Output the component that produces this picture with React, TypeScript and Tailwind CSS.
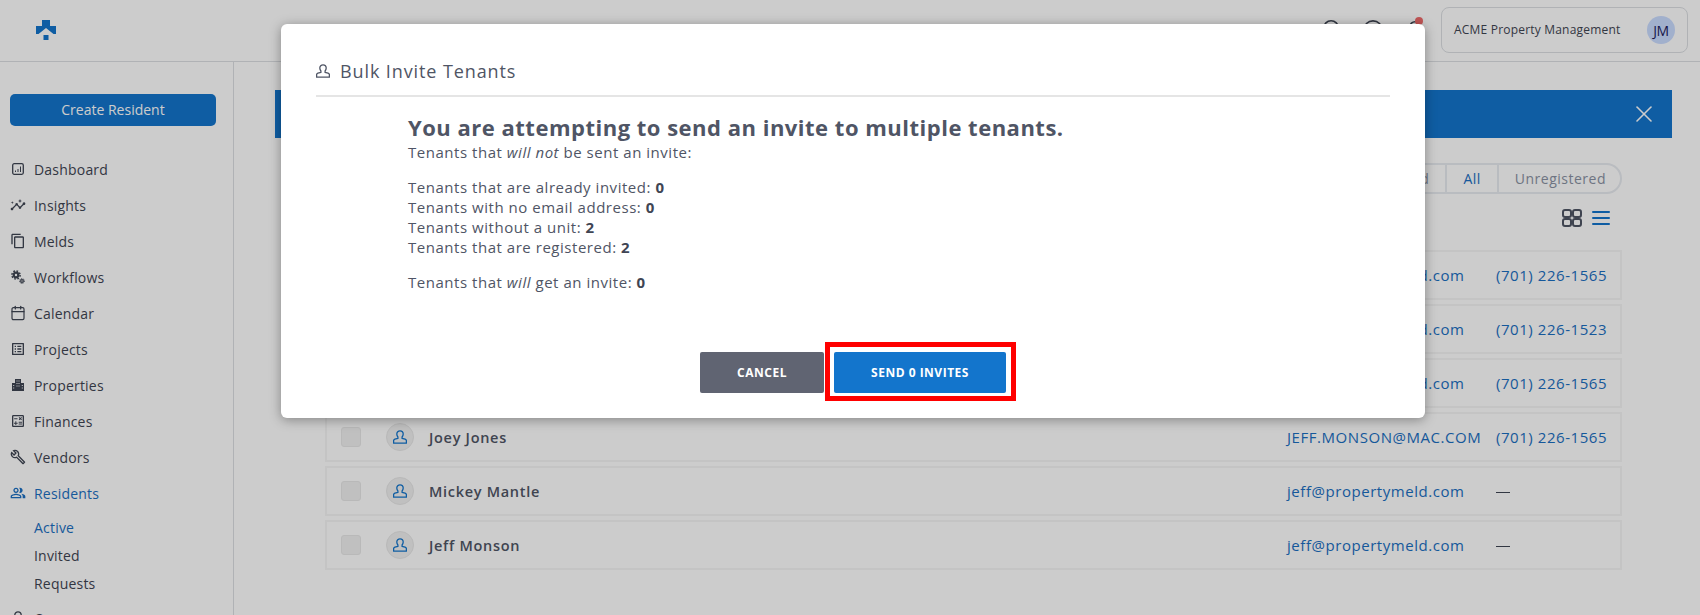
import { Calendar, HelpCircle, Bell, Search, X } from "lucide-react"
import { MdInsights, MdOutlineCalculate, MdOutlineListAlt, MdOutlineBuild, MdOutlinePeopleAlt, MdOutlineContentCopy } from "react-icons/md"
import { ReactNode } from "react"

function DashboardIcon() {
  return (
    <svg viewBox="0 0 12 12" className="w-[12px] h-[12px] ml-[2px]" fill="none" stroke="currentColor">
      <rect x="0.700" y="0.700" width="10.600" height="10.600" rx="1.500" strokeWidth="1.300" />
      <path d="M3.500 9V7.500M6 9V6M8.500 9V3.500" strokeWidth="1" />
    </svg>
  )
}

function GearsIcon() {
  return (
    <svg viewBox="0 0 14 14" className="w-[14px] h-[14px] ml-[1px]" fill="none" stroke="currentColor">
      <circle cx="5" cy="5" r="2.300" strokeWidth="2.200" />
      <circle cx="5" cy="5" r="4.100" strokeWidth="1.500" strokeDasharray="1.700 1.520" />
      <circle cx="11" cy="11" r="1.300" strokeWidth="1.300" />
      <circle cx="11" cy="11" r="2.400" strokeWidth="1" strokeDasharray="1 0.880" />
    </svg>
  )
}

function BuildingsIcon() {
  return (
    <svg viewBox="0 0 12 12" className="w-[12px] h-[12px] ml-[2px]" fill="currentColor">
      <path d="M3 0h6v4h3v8H0V4h3z" />
      <path fill="#fff" d="M4.500 1.500h1v1h-1zM6.500 1.500h1v1h-1zM4.500 4h1v1h-1zM6.500 4h1v1h-1zM1.200 6h1v1h-1zM9.800 6h1v1h-1zM4.500 6.500h1v1h-1zM6.500 6.500h1v1h-1zM1.200 8.500h1v1h-1zM9.800 8.500h1v1h-1z" />
    </svg>
  )
}

const navItems: { label: string; icon: ReactNode }[] = [
  { label: "Dashboard", icon: <DashboardIcon /> },
  { label: "Insights", icon: <MdInsights size={16} /> },
  { label: "Melds", icon: <MdOutlineContentCopy size={16} /> },
  { label: "Workflows", icon: <GearsIcon /> },
  { label: "Calendar", icon: <Calendar size={16} strokeWidth={1.8} /> },
  { label: "Projects", icon: <MdOutlineListAlt size={16} /> },
  { label: "Properties", icon: <BuildingsIcon /> },
  { label: "Finances", icon: <MdOutlineCalculate size={16} /> },
  { label: "Vendors", icon: <MdOutlineBuild size={16} /> },
]

const rows = [
  { name: "", email: "jeff@propertymeld.com", phone: "(701) 226-1565" },
  { name: "", email: "jeff@propertymeld.com", phone: "(701) 226-1523" },
  { name: "", email: "jeff@propertymeld.com", phone: "(701) 226-1565" },
  { name: "Joey Jones", email: "JEFF.MONSON@MAC.COM", phone: "(701) 226-1565" },
  { name: "Mickey Mantle", email: "jeff@propertymeld.com", phone: "" },
  { name: "Jeff Monson", email: "jeff@propertymeld.com", phone: "" },
]

function PersonIcon({ className }: { className?: string }) {
  return (
    <svg viewBox="0 0 14 14" fill="none" stroke="currentColor" strokeWidth="1.300" strokeLinejoin="round" className={className}>
      <path d="M7 0.800a3.200 3.200 0 0 1 3.200 3.200c0 1.400-.6 2.300-1.100 3v1.400l3 .8c.9.300 1.300.8 1.300 1.600v2.400H0.600v-2.400c0-.8.400-1.300 1.300-1.600l3-.8V7c-.5-.7-1.100-1.600-1.100-3A3.200 3.200 0 0 1 7 0.800z" />
    </svg>
  )
}

function Logo() {
  return (
    <svg viewBox="0 0 20 20" className="w-[20px] h-[20px] text-[#1375cc]" fill="currentColor">
      <path d="M6 0h8v6h6v8h-2.500L10 8l-7.500 6H0V6h6z" />
      <rect x="7.500" y="15" width="5" height="5" />
    </svg>
  )
}

function Sidebar() {
  return (
    <aside className="w-[234px] shrink-0 border-r border-[#dcdfe3] pl-[10px] pr-[17px] pt-[32px]">
      <button className="w-full h-[32px] rounded-[5px] bg-[#1375cc] text-white text-[14px] pb-[2px]">Create Resident</button>
      <nav className="mt-[25px] text-[14px] text-[#3f4553] tracking-[0.2px]">
        {navItems.map((item) => (
          <div key={item.label} className="flex items-center h-[36px]">
            <span className="w-[24px] flex justify-start text-[#3f4553]">{item.icon}</span>
            {item.label}
          </div>
        ))}
        <div className="flex items-center h-[36px] text-[#1b6fc2]">
          <span className="w-[24px] flex"><MdOutlinePeopleAlt size={16} /></span>
          Residents
        </div>
        <div className="pl-[24px] pt-[2px]">
          <div className="h-[29px] leading-[30px] text-[#1b6fc2]">Active</div>
          <div className="h-[28px] leading-[28px]">Invited</div>
          <div className="h-[28px] leading-[28px]">Requests</div>
        </div>
        <div className="flex items-center h-[36px] mt-[2px]">
          <span className="w-[24px] flex"><PersonIcon className="w-[14px] h-[14px] ml-[1px]" /></span>
          Owners
        </div>
      </nav>
    </aside>
  )
}

function ResidentRow({ name, email, phone }: { name: string; email: string; phone: string }) {
  return (
    <div className="h-[50px] border-2 border-[#f5f5f5] flex items-center pl-[14px] text-[15px] tracking-[0.55px]">
      <div className="w-[20px] h-[20px] rounded-[3px] bg-[#f0f0f0] border border-[#e8e8e8]" />
      <div className="ml-[25px] w-[28px] h-[28px] rounded-full bg-[#f0f0f0] border border-[#e8e8e8] flex items-center justify-center text-[#1375cc]">
        <PersonIcon className="w-[14px] h-[14px]" />
      </div>
      <div className="ml-[15px] pt-[2px] text-[14.500px] font-semibold text-[#4f5565] tracking-[0.7px]">{name}</div>
      <div className="ml-auto w-[209px] text-[#1b6fc2]">{email}</div>
      <div className="w-[124px] text-[#1b6fc2]">
        {phone || <div className="w-[14px] h-[1px] bg-[#3f4553] mt-[2px]" />}
      </div>
    </div>
  )
}

function Main() {
  return (
    <main className="flex-1 pl-[41px] pr-[28px] pt-[28px]">
      <div className="h-[48px] bg-[#1375cc] flex items-center justify-end pr-[14px] text-white">
        <X size={28} strokeWidth={1.4} />
      </div>
      <div className="flex justify-end mt-[25px] pr-[50px]">
        <div className="flex h-[31px] items-center border-2 border-[#e8ebf0] rounded-full text-[14px] text-[#8a92a3] tracking-[0.5px]">
          <div className="px-[16px] h-full flex items-center border-r-2 border-[#e8ebf0]">Registered</div>
          <div className="px-[16px] h-full flex items-center border-r-2 border-[#e8ebf0] text-[#1b6fc2]">All</div>
          <div className="pl-[16px] pr-[14px] h-full flex items-center">Unregistered</div>
        </div>
      </div>
      <div className="flex justify-end items-center gap-[10px] mt-[14px] pr-[62px] h-[20px]">
        <svg viewBox="0 0 20 18" className="w-[20px] h-[18px] text-[#4f5565]" fill="none" stroke="currentColor" strokeWidth="2">
          <rect x="1" y="1" width="8" height="7" rx="2" />
          <rect x="11" y="1" width="8" height="7" rx="2" />
          <rect x="1" y="10" width="8" height="7" rx="2" />
          <rect x="11" y="10" width="8" height="7" rx="2" />
        </svg>
        <svg viewBox="0 0 18 14" className="w-[18px] h-[14px] text-[#1375cc]" fill="currentColor">
          <rect y="0" width="18" height="2" rx="1" />
          <rect y="6" width="18" height="2" rx="1" />
          <rect y="12" width="18" height="2" rx="1" />
        </svg>
      </div>
      <div className="mt-[22px] mx-[50px] flex flex-col gap-[4px]">
        {rows.map((r, i) => (
          <ResidentRow key={i} {...r} />
        ))}
      </div>
    </main>
  )
}

function Modal() {
  return (
    <div className="absolute inset-0 bg-black/20">
      <div className="absolute left-[281px] top-[24px] w-[1144px] h-[394px] bg-white rounded-[6px] shadow-[0_2px_12px_rgba(0,0,0,0.35)] px-[35px] pt-[37px]">
        <div className="flex items-center gap-[10px] h-[20px] text-[18px] text-[#4f5565] tracking-[0.9px]">
          <PersonIcon className="w-[14px] h-[14px]" />
          Bulk Invite Tenants
        </div>
        <div className="mt-[14px] h-[2px] bg-[#e5e5e5]" />
        <div className="ml-[92px] mt-[16px] text-[15px] leading-[20px] text-[#4f5565] tracking-[0.53px]">
          <h2 className="text-[22px] leading-[28px] font-bold tracking-[0.5px]">You are attempting to send an invite to multiple tenants.</h2>
          <p className="mt-[1px]">Tenants that <i>will not</i> be sent an invite:</p>
          <div className="mt-[15px]">
            <p>Tenants that are already invited: <b className="text-[#3f4553]">0</b></p>
            <p>Tenants with no email address: <b className="text-[#3f4553]">0</b></p>
            <p>Tenants without a unit: <b className="text-[#3f4553]">2</b></p>
            <p>Tenants that are registered: <b className="text-[#3f4553]">2</b></p>
          </div>
          <p className="mt-[15px]">Tenants that <i>will</i> get an invite: <b className="text-[#3f4553]">0</b></p>
        </div>
        <div className="flex justify-center gap-[10px] mt-[60px]">
          <button className="w-[124px] h-[41px] rounded-[2px] bg-[#606472] text-white text-[12px] font-bold tracking-[0.5px]">CANCEL</button>
          <div className="relative">
            <button className="w-[172px] h-[41px] rounded-[2px] bg-[#1375cc] text-white text-[12px] font-bold tracking-[0.5px]">SEND 0 INVITES</button>
            <div className="absolute -left-[9px] -top-[10px] w-[191px] h-[59px] border-[5px] border-[#ff0000]" />
          </div>
        </div>
      </div>
    </div>
  )
}

export default function App() {
  return (
    <div className="relative h-[615px] overflow-hidden bg-white font-['Open_Sans',sans-serif]">
      <header className="h-[62px] border-b border-[#dcdfe3] flex items-center pl-[36px] pr-[12px]">
        <div className="-mt-[1px]"><Logo /></div>
        <div className="ml-auto flex items-center text-[#3f4553]">
          <Search size={22} strokeWidth={1.8} className="-mt-[3px]" />
          <HelpCircle size={22} strokeWidth={1.8} className="ml-[19px] -mt-[2px]" />
          <div className="relative ml-[21px] -mt-[2px]">
            <Bell size={20} strokeWidth={1.8} />
            <span className="absolute -top-[3px] left-[10px] w-[8px] h-[8px] rounded-full bg-[#f06a6a]" />
          </div>
          <div className="ml-[16px] w-[247px] h-[46px] rounded-[8px] border-[1.500px] border-[#dcdfe3] flex items-center justify-between pl-[12px] pr-[12px] -mt-[1px]">
            <span className="text-[12px] text-[#3f4553] tracking-[0.2px]">ACME Property Management</span>
            <span className="w-[28px] h-[28px] rounded-full bg-[#cadcff] text-[14px] font-medium tracking-[-0.5px] text-[#1c1c5c] flex items-center justify-center">JM</span>
          </div>
        </div>
      </header>
      <div className="flex h-[553px]">
        <Sidebar />
        <Main />
      </div>
      <Modal />
    </div>
  )
}
